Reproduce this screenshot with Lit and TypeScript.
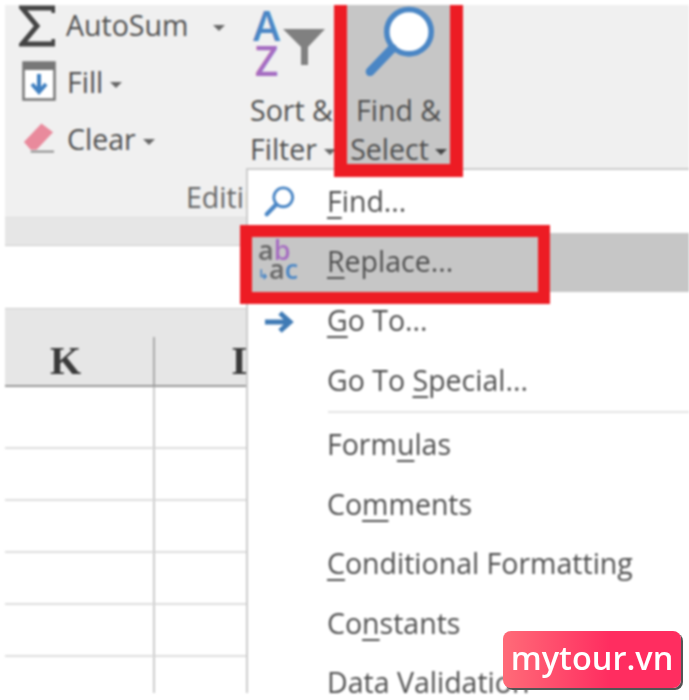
import { LitElement, html, css } from "lit";
import { customElement } from "lit/decorators.js";

const caret = html`<i class="caret"></i>`;

@customElement("app-root")
export class AppRoot extends LitElement {
  static styles = css`
    :host { display: block; width: 689px; height: 700px; background: #fff; overflow: hidden; }
    .page { position: relative; margin: 5px 0 0 5px; height: 688px; overflow: hidden;
      font-family: "Open Sans", "Liberation Sans", sans-serif; color: #4f4f4f; font-size: 28.5px; filter: blur(.85px); }
    .ribbon { height: 213px; background: #f0f0f0; display: grid; grid-template-columns: 240px 89px 129px 1fr; overflow: hidden; border-bottom: 1px solid #ddd; box-sizing: border-box; }
    .small { padding-left: 14px; margin-top: -8px; white-space: nowrap; }
    .tool { display: flex; align-items: center; height: 57px; gap: 11px; }
    .tool span { padding-bottom: 2px; }
    .tool svg { flex: none; }
    .tool svg.fill { margin-left: 3px; margin-top: -4px; }
    .tool svg.eraser { margin-left: 3px; margin-right: 1px; margin-top: -4px; }
    .editing { margin: 14px 0 0 167px; line-height: 30px; color: #666; font-size: 28.5px; }
    .caret { display: inline-block; width: 0; height: 0; border: 6px solid transparent; border-top: 6px solid #666; border-bottom: 0; vertical-align: middle; margin-left: 7px; }
    .gapped { margin-left: 25px; }
    .sort { padding-left: 5px; white-space: nowrap; overflow: visible; }
    .big-icon { height: 86px; display: flex; }
    .letters { width: 33px; padding-top: 3px; text-align: center; font-size: 41px; line-height: 35px; font-weight: 600; }
    .a { color: #4a86c5; }
    .z { color: #a56cc1; }
    .funnel { margin-top: 24px; }
    .lines { line-height: 39px; }
    .find { position: relative; z-index: 2; height: 172px; box-sizing: border-box; border: 13px solid #ed1c24; border-top: 0; background: #c6c6c6; text-align: center; white-space: nowrap; }
    .find .big-icon { justify-content: center; }
    .find .caret { border-top-color: #444; margin-left: 6px; }
    .strip { height: 28px; background: #e6e6e6; box-sizing: border-box; border-bottom: 1px solid #ccc; }
    .bar { height: 62px; background: #fff; }
    .head { height: 79px; box-sizing: border-box; background: #e6e6e6; border-top: 1px solid #ccc; border-bottom: 2px solid #999; padding-top: 28px; display: grid; grid-template-columns: 150px 1fr; }
    .col { font-family: "Liberation Serif", serif; font-weight: 700; font-size: 40px; line-height: 48px; color: #3a3a3a; text-align: center; }
    .col.k { border-right: 2px solid #aaa; padding-right: 27px; }
    .col.l { text-align: left; padding-left: 77px; }
    .rows { display: grid; grid-template-columns: 150px 1fr; grid-auto-rows: 52px; }
    .rows.top { grid-auto-rows: 62px; }
    .cell { border-bottom: 2px solid #ddd; box-sizing: border-box; }
    .cell.k { border-right: 2px solid #ccc; }
    .menu { position: absolute; z-index: 1; left: 241px; top: 163px; right: 0; bottom: 0; background: #fff; border-left: 2px solid #ccc; border-top: 2px solid #ccc; padding-top: 3px; }
    .item { position: relative; height: 59.5px; display: flex; align-items: center; white-space: nowrap; }
    .item.on { background: #c6c6c6; }
    .slot { width: 80px; flex: none; display: flex; justify-content: center; padding-right: 18px; box-sizing: border-box; }
    .label { padding-bottom: 3px; margin-left: -1px; }
    .label u { text-underline-offset: 5px; text-decoration-thickness: 2px; }
    .sep { height: 2px; margin: 0 0 3px 80px; background: #e4e4e4; }
    .redbox { position: absolute; left: -8px; width: 310px; top: -8px; bottom: -12px; box-sizing: border-box; border: 12px solid #ed1c24; }
    .ab { display: grid; font-size: 27px; line-height: 19px; font-weight: 600; color: #666; width: 42px; }
    .ab .p { color: #a56cc1; }
    .ab .b { color: #4a86c5; }
    .ab .arrow { color: #4a86c5; font-size: 13px; }
  `;

  private mag(size: number, sw: number) {
    return html`<svg width=${size} height=${size} viewBox="0 0 64 72">
      <circle cx="41" cy="24" r="20" fill="#fff" stroke="#4a86c5" stroke-width=${sw}></circle>
      <path d="M26 39 L6 60" stroke="#4a86c5" stroke-width=${sw + 3} stroke-linecap="round"></path>
    </svg>`;
  }

  render() {
    const rows = [0, 1, 2, 3, 4, 5];
    return html`
      <div class="page">
        <div class="ribbon">
          <div class="small">
            <div class="tool">
              <svg width="36" height="42" viewBox="0 0 36 42"><path d="M35 8V3H3l15 18L3 39h32v-5" fill="none" stroke="#444" stroke-width="5"></path></svg>
              <span>AutoSum<i class="caret gapped"></i></span>
            </div>
            <div class="tool">
              <svg class="fill" width="34" height="40" viewBox="0 0 34 40"><rect x="1.5" y="1.5" width="31" height="37" fill="#fff" stroke="#777" stroke-width="2.5"></rect><rect x="1" y="1" width="32" height="8" fill="#777"></rect><path d="M17 13v17M10 23l7 8 7-8" fill="none" stroke="#3f7fc0" stroke-width="4"></path></svg>
              <span>Fill${caret}</span>
            </div>
            <div class="tool">
              <svg class="eraser" width="33" height="34" viewBox="0 0 34 34"><path d="M2 21 L20 2 L32 11 L15 29 L9 29 Z" fill="#e98a9c"></path><path d="M9 31H33" stroke="#888" stroke-width="2"></path></svg>
              <span>Clear${caret}</span>
            </div>
            <div class="editing">Editing</div>
          </div>
          <div class="sort">
            <div class="big-icon">
              <div class="letters"><div class="a">A</div><div class="z">Z</div></div>
              <svg class="funnel" width="42" height="37" viewBox="0 0 42 37"><path d="M0 0H42L25 18V36H18V18Z" fill="#808080"></path></svg>
            </div>
            <div class="lines">Sort &amp;<br />Filter${caret}</div>
          </div>
          <div class="find">
            <div class="big-icon">${this.mag(80, 5)}</div>
            <div class="lines">Find &amp;<br />Select${caret}</div>
          </div>
        </div>
        <div class="strip"></div>
        <div class="bar"></div>
        <div class="head"><div class="col k">K</div><div class="col l">L</div></div>
        <div class="rows top"><div class="cell k"></div><div class="cell"></div></div>
        <div class="rows">
          ${rows.map(() => html`<div class="cell k"></div><div class="cell"></div>`)}
        </div>

        <div class="menu">
          <div class="item"><span class="slot">${this.mag(34, 6)}</span><span class="label"><u>F</u>ind...</span></div>
          <div class="item on">
            <span class="slot"><span class="ab"><span><span>a</span><span class="p">b</span></span><span><span class="arrow">↳</span><span>a</span><span class="b">c</span></span></span></span>
            <span class="label"><u>R</u>eplace...</span>
            <span class="redbox"></span>
          </div>
          <div class="item"><span class="slot"><svg width="30" height="22" viewBox="0 0 30 22"><path d="M1 11H26M16 2l10 9-10 9" fill="none" stroke="#3f7ab5" stroke-width="5"></path></svg></span><span class="label"><u>G</u>o To...</span></div>
          <div class="item"><span class="slot"></span><span class="label">Go To <u>S</u>pecial...</span></div>
          <div class="sep"></div>
          <div class="item"><span class="slot"></span><span class="label">Form<u>u</u>las</span></div>
          <div class="item"><span class="slot"></span><span class="label">Co<u>m</u>ments</span></div>
          <div class="item"><span class="slot"></span><span class="label"><u>C</u>onditional Formatting</span></div>
          <div class="item"><span class="slot"></span><span class="label">Co<u>n</u>stants</span></div>
          <div class="item"><span class="slot"></span><span class="label">Data Validation</span></div>
        </div>
      </div>
      <mytour-badge></mytour-badge>
    `;
  }
}

@customElement("mytour-badge")
export class MytourBadge extends LitElement {
  static styles = css`
    :host { position: absolute; left: 503px; top: 631px; width: 178px; height: 57px; box-sizing: border-box; border-radius: 8px; padding-bottom: 4px;
      background: linear-gradient(90deg, #ff6b78, #ff2d60 60%); box-shadow: 2px 2px 0 #555;
      display: flex; align-items: center; justify-content: center;
      font-family: "Open Sans", "Liberation Sans", sans-serif; font-weight: 600; font-size: 32.5px; color: #fff; }
  `;
  render() { return html`<span>mytour.vn</span>`; }
}
